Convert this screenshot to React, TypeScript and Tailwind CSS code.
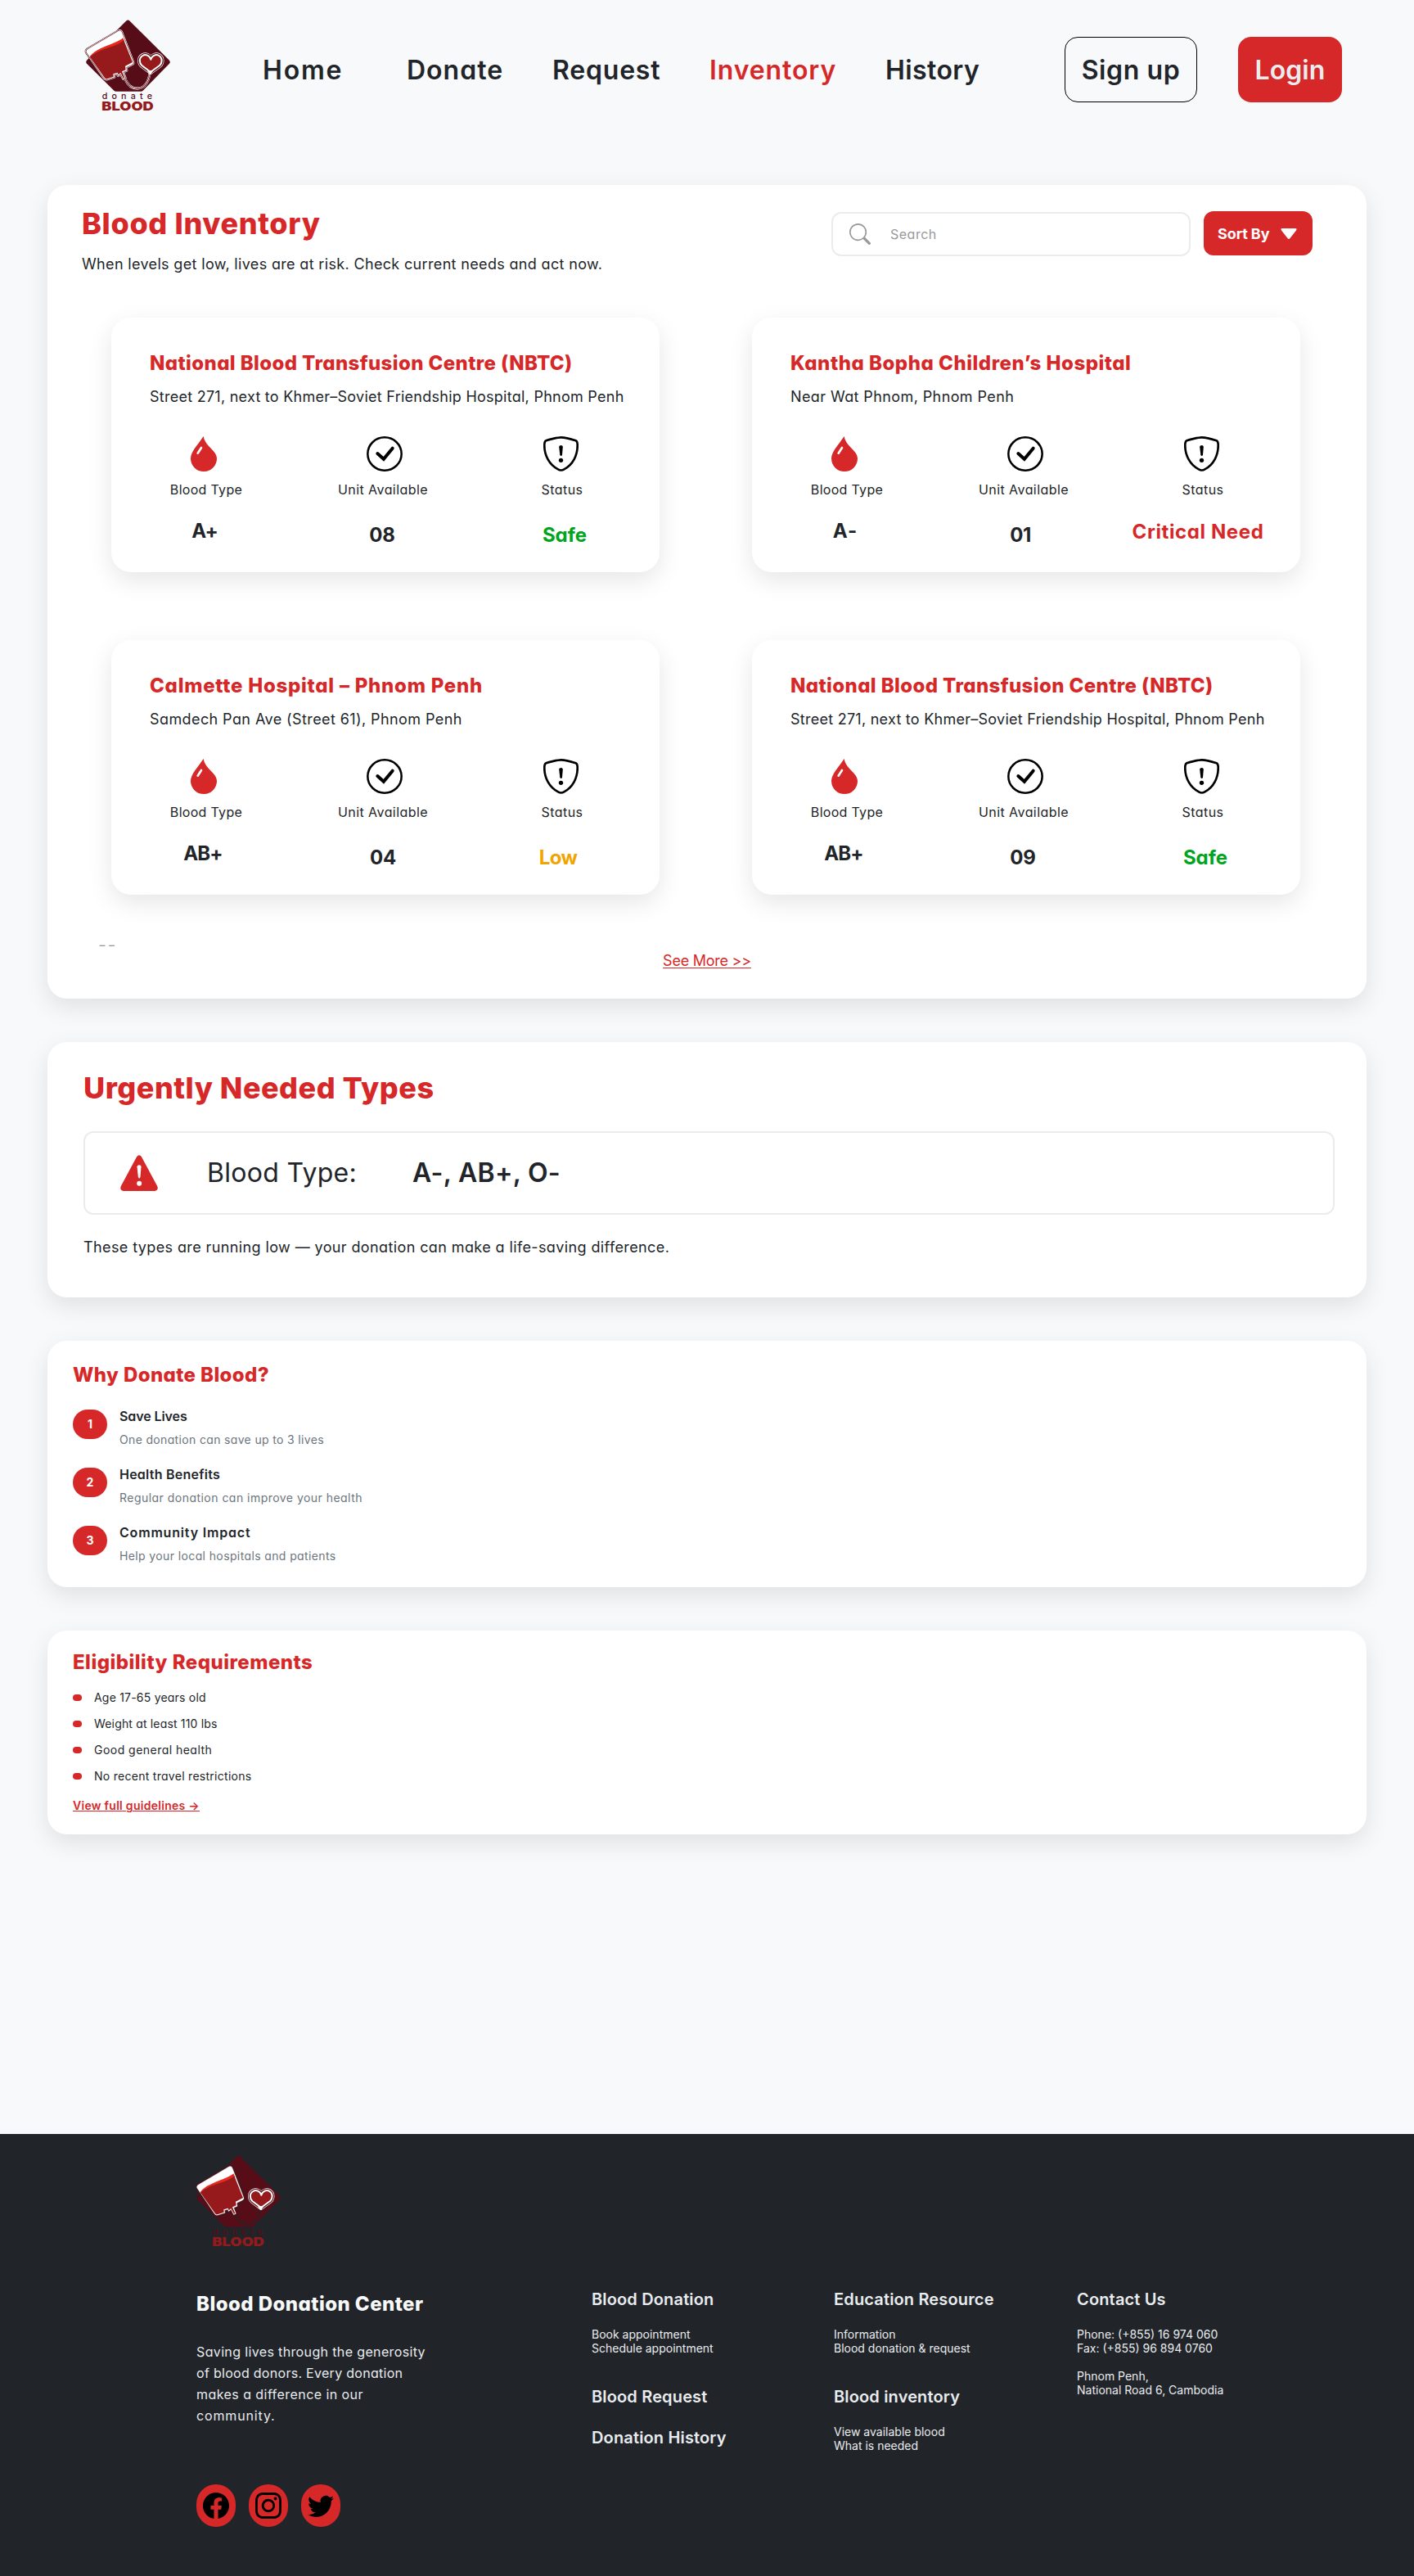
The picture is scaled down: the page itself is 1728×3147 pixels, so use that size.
import type { ReactNode } from "react";
import { BsFacebook, BsInstagram, BsSearch, BsTwitter } from "react-icons/bs";

const cardShadow = "shadow-[0_10px_30px_rgba(0,0,0,0.1)]";
const footerHeading = "text-[20px] leading-[24px] font-semibold tracking-[0.15px]";
const footerLinks = "text-[14px] leading-[17px] font-normal";

function Logo({ line, className }: { line: string; className: string }) {
  const bag =
    "M164 84 Q173 79 177 89 L218 196 Q221 203 215 206 L193 217 L195 229 L182 234 L190 256 L182 260 L172 241 L163 248 L160 240 L148 244 L150 253 L124 261 Q116 263 112 257 L48 163 Q44 156 51 151 Z";
  const heart =
    "M283 188 C279 172 263 168 253 174 C238 183 241 201 250 210 L282 234 L315 210 C325 201 327 183 313 174 C303 168 287 172 283 188 Z";
  const tube = "M279 238 C276 266 262 293 235 294 C212 295 198 280 190 262";
  return (
    <svg viewBox="0 0 390 420" className={className} strokeLinejoin="round" strokeLinecap="round">
      <path d="M192 47 Q199 40 206 47 L351 191 Q356 197 351 203 L254 302 Q251 305 247 305 H155 Q151 305 148 302 L48 203 Q43 197 48 191 Z" fill="#560d18" />
      <g fill="none">
        <path d={tube} stroke={line} strokeWidth="9" />
        <path d={tube} stroke="#560d18" strokeWidth="6.5" />
        <path d={tube} stroke={line} strokeWidth="2.5" />
        <path d={bag} stroke="#560d18" strokeWidth="11" />
        <path d={bag} stroke={line} strokeWidth="8" />
        <path d={bag} stroke="#560d18" strokeWidth="4.5" />
      </g>
      <path d={bag} fill="#fff" stroke="#fff" strokeWidth="1" />
      <path d="M59 177 C78 152 112 142 145 128 Q172 118 181 109 L186 121 Q165 140 130 146 Q90 154 62 182 Z" fill="#e8281c" />
      <path d="M60 179 Q84 157 130 144 Q166 134 184 118 L216 198 L189 212 L191 226 L177 232 L187 255 L183 257 L172 237 L164 244 L161 236 L145 241 L146 251 L122 259 Q117 260 114 256 Z" fill="#961a1b" />
      <path d={heart} fill="none" stroke="#fff" strokeWidth="17" />
      <path d={heart} fill="none" stroke="#560d18" strokeWidth="13" />
      <path d={heart} fill="#961a1b" stroke="#fff" strokeWidth="6" />
      <path d="M272 231 L281 242 L289 231 Z" fill="#fff" stroke="#fff" strokeWidth="3" />
      <text x="104" y="333" textLength="184" fontSize="32" fill="#560d18" className="font-['Inter'] font-medium [font-feature-settings:normal]">
        donate
      </text>
      <text x="103" y="375" textLength="190" lengthAdjust="spacingAndGlyphs" fontSize="44" fill="#961a1b" className="font-['Inter'] font-black">
        BLOOD
      </text>
    </svg>
  );
}

function DropIcon() {
  return (
    <svg viewBox="0 0 96 129" className="h-[43px] w-8 -translate-x-px">
      <path d="M47 0 C49 15 57 25 67 37 C80 51 96 63 96 82 A48 47 0 0 1 0 82 C0 57 24 34 47 0 Z" fill="#d62828" />
      <path d="M39 42 L26 62" stroke="#fff" strokeWidth="8" strokeLinecap="round" />
    </svg>
  );
}

function CheckCircleIcon() {
  return (
    <svg viewBox="0 0 132 129" className="h-[43px] w-11 translate-x-[2px]" fill="none" stroke="#000">
      <ellipse cx="66" cy="64.5" rx="62" ry="60.5" strokeWidth="7.5" />
      <path d="M40 63 L62.500 83.500 L95 44" strokeWidth="12" strokeLinecap="round" />
    </svg>
  );
}

function ShieldIcon() {
  return (
    <svg viewBox="0 0 129 129" className="size-[43px] -translate-x-px">
      <path
        d="M65 4 C78 4 110 13 119 16 Q124 18 125 28 C127 70 107 105 76 121 Q65 128 54 121 C23 105 2 70 4 28 Q5 18 10 16 C20 12 52 4 65 4 Z"
        fill="none"
        stroke="#000"
        strokeWidth="8"
      />
      <path d="M57.500 38 Q58 33 65 33 Q71 33 71.500 38 L69 69 Q65 75 61 69 Z" />
      <circle cx="64.500" cy="88" r="8" />
    </svg>
  );
}

function WarningIcon() {
  return (
    <svg viewBox="0 0 137 132" className="ml-[43px] h-[44px] w-[46px]">
      <path d="M60 6 Q69 -5 77 6 L135 114 Q141 129 126 132 H11 Q-4 129 2 114 Z" fill="#d62828" />
      <path d="M61 43 Q62 37 69 37 Q76 37 76 43 L73 80 Q69 91 65 80 Z" fill="#fff" />
      <circle cx="69" cy="104" r="9" fill="#fff" />
    </svg>
  );
}

function Stat({ icon, label, children }: { icon: ReactNode; label: ReactNode; children: ReactNode }) {
  return (
    <div className="flex flex-col items-center whitespace-nowrap">
      {icon}
      <div className="mt-[10px] text-[16px] leading-[24px]">{label}</div>
      <div className="mt-[21px] text-[24px] leading-[36px] font-bold">{children}</div>
    </div>
  );
}

type Center = { name: ReactNode; address: ReactNode; type: ReactNode; units: ReactNode; status: ReactNode };

const centers: Center[] = [
  {
    name: <span className="tracking-[0.4px]">National Blood Transfusion Centre (NBTC)</span>,
    address: <span className="tracking-[0.26px]">Street 271, next to Khmer–Soviet Friendship Hospital, Phnom Penh</span>,
    type: <div className="tracking-[-1px]">A+</div>,
    units: <div className="-translate-x-px translate-y-[5px] tracking-[-0.2px]">08</div>,
    status: <div className="translate-x-[4px] translate-y-[5px] text-[#00a51e]">Safe</div>,
  },
  {
    name: <span className="tracking-[0.52px]">Kantha Bopha Children’s Hospital</span>,
    address: <span className="tracking-[0.4px]">Near Wat Phnom, Phnom Penh</span>,
    type: <div className="tracking-[1px]">A-</div>,
    units: <div className="-translate-x-1 translate-y-[5px] tracking-[-0.6px]">01</div>,
    status: <div className="-translate-x-[5px] translate-y-px tracking-[0.6px] text-[#d62828]">Critical Need</div>,
  },
  {
    name: <span className="tracking-[0.75px]">Calmette Hospital – Phnom Penh</span>,
    address: <span className="tracking-[0.41px]">Samdech Pan Ave (Street 61), Phnom Penh</span>,
    type: <div className="-translate-x-[2px] tracking-[-0.9px]">AB+</div>,
    units: <div className="translate-y-[5px] tracking-[-0.2px]">04</div>,
    status: <div className="-translate-x-[4px] translate-y-[5px] tracking-[-0.6px] text-[#f0a500]">Low</div>,
  },
  {
    name: <span className="tracking-[0.4px]">National Blood Transfusion Centre (NBTC)</span>,
    address: <span className="tracking-[0.26px]">Street 271, next to Khmer–Soviet Friendship Hospital, Phnom Penh</span>,
    type: <div className="-translate-x-[2px] tracking-[-0.9px]">AB+</div>,
    units: <div className="-translate-x-px translate-y-[5px] tracking-[-0.2px]">09</div>,
    status: <div className="translate-x-[4px] translate-y-[5px] text-[#00a51e]">Safe</div>,
  },
];

function CenterCard({ c }: { c: Center }) {
  return (
    <article className={`h-[311px] rounded-[24px] bg-white pt-[38px] ${cardShadow}`}>
      <h3 className="pl-[47px] text-[24px] leading-[36px] font-extrabold whitespace-nowrap text-[#d62828]">{c.name}</h3>
      <p className="mt-[9px] pl-[47px] text-[18px] leading-[27px] whitespace-nowrap">{c.address}</p>
      <div className="mt-[35px] grid grid-cols-[218px_218px_218px] pl-[5px]">
        <Stat icon={<DropIcon />} label={<div className="translate-x-[2px] tracking-[0.3px]">Blood Type</div>}>{c.type}</Stat>
        <Stat icon={<CheckCircleIcon />} label={<div className="tracking-[0.45px]">Unit Available</div>}>{c.units}</Stat>
        <Stat icon={<ShieldIcon />} label={<div className="translate-x-px tracking-[0.43px]">Status</div>}>{c.status}</Stat>
      </div>
    </article>
  );
}

const reasons = [
  { title: <span className="tracking-[-0.09px]">Save Lives</span>, text: <span className="tracking-[0.34px]">One donation can save up to 3 lives</span> },
  { title: <span className="tracking-[0.24px]">Health Benefits</span>, text: <span className="tracking-[0.47px]">Regular donation can improve your health</span> },
  { title: <span className="tracking-[0.82px]">Community Impact</span>, text: <span className="tracking-[0.38px]">Help your local hospitals and patients</span> },
];

const requirements = [
  <span className="tracking-[0.21px]">Age 17-65 years old</span>,
  <span className="tracking-[0.17px]">Weight at least 110 lbs</span>,
  <span className="tracking-[0.47px]">Good general health</span>,
  <span className="tracking-[0.28px]">No recent travel restrictions</span>,
];

export default function App() {
  return (
    <div className="w-[1728px] bg-[#f8f9fb] font-['Inter',sans-serif] text-[#212529]">
      <div className="h-[2607px] [font-feature-settings:'cv11']">
        <header className="flex h-[226px] items-start">
          <Logo line="#fff" className="mt-[10px] ml-[90px] h-[140px] w-[130px] shrink-0" />
          <nav className="mt-[46px] ml-[101px] grid h-20 w-[980px] shrink-0 grid-cols-[176px_178px_192px_215px_auto] items-center text-[32px] leading-[48px] font-semibold whitespace-nowrap">
            <a className="tracking-[1.8px]">Home</a>
            <a className="tracking-[1px]">Donate</a>
            <a className="tracking-[0.8px]">Request</a>
            <a className="tracking-[0.9px] text-[#d62828]">Inventory</a>
            <a className="tracking-[0.4px]">History</a>
          </nav>
          <div className="mt-[45px] flex gap-[50px] text-[32px] leading-[48px] font-semibold">
            <button className="h-20 w-[162px] rounded-[16px] border border-black pt-px tracking-[0.6px]">Sign up</button>
            <button className="h-20 w-[127px] rounded-[16px] bg-[#d62828] pt-px tracking-[0.1px] text-[#e9ecef]">Login</button>
          </div>
        </header>

        <main className="flex flex-col gap-[53px] px-[58px]">
          <section className={`h-[994px] rounded-[24px] bg-white ${cardShadow}`}>
            <div className="flex h-[162px] items-start justify-between pr-[66px] pl-[42px]">
              <div className="pt-[20px]">
                <h1 className="text-[36px] leading-[54px] font-extrabold tracking-[0.66px] text-[#d62828]">Blood Inventory</h1>
                <p className="mt-[9px] text-[18px] leading-[27px] tracking-[0.34px]">
                  When levels get low, lives are at risk. Check current needs and act now.
                </p>
              </div>
              <div className="flex gap-4 pt-8">
                <div className="mt-px flex h-[54px] w-[439px] items-center rounded-[12px] border-2 border-[#e9ecef] pl-[20px] text-[#999999]">
                  <BsSearch className="size-[26px]" />
                  <span className="ml-6 text-[16px] tracking-[0.5px]">Search</span>
                </div>
                <button className="flex h-[54px] w-[133px] items-center rounded-[12px] bg-[#d62828] pl-[17px] text-[18px] font-bold tracking-[-0.1px] text-white">
                  Sort By
                  <svg viewBox="0 0 20 13" className="ml-[14px] h-[13px] w-5">
                    <path d="M2 0 H18 Q20.500 0.300 19 2.500 L11.500 12 Q10 13.800 8.500 12 L1 2.500 Q-0.500 0.300 2 0 Z" fill="#fff" />
                  </svg>
                </button>
              </div>
            </div>
            <div className="grid grid-cols-[670px_670px] gap-x-[113px] gap-y-[83px] pl-[78px]">
              {centers.map((c, i) => (
                <CenterCard key={i} c={c} />
              ))}
            </div>
            <div className="grid grid-cols-3 items-start">
              <span className="mt-[49px] ml-[62px] text-[22px] leading-[24px] font-light tracking-[1.6px] text-[#999999]">--</span>
              <a className="mt-[67px] justify-self-center text-[18px] leading-[27px] tracking-[-0.25px] text-[#d62828] underline decoration-1 underline-offset-2">
                See More &gt;&gt;
              </a>
            </div>
          </section>

          <section className={`h-[312px] rounded-[24px] bg-white pt-[29px] pl-[44px] ${cardShadow}`}>
            <h2 className="text-[36px] leading-[54px] font-extrabold tracking-[0.49px] text-[#d62828]">Urgently Needed Types</h2>
            <div className="mt-[26px] flex h-[102px] w-[1529px] items-center rounded-[12px] border-2 border-[#e9ecef] text-[32px] leading-[48px]">
              <WarningIcon />
              <span className="ml-[60px] w-[251px] tracking-[0.3px]">Blood Type:</span>
              <span className="font-semibold tracking-[0.3px]">A-, AB+, O-</span>
            </div>
            <p className="mt-[26px] text-[18px] leading-[27px] tracking-[0.39px]">
              These types are running low — your donation can make a life-saving difference.
            </p>
          </section>

          <section className={`h-[301px] rounded-[24px] bg-white pt-[24px] pl-[31px] ${cardShadow}`}>
            <h2 className="text-[24px] leading-[36px] font-extrabold tracking-[0.4px] text-[#d62828]">Why Donate Blood?</h2>
            <ol className="mt-[20px] flex flex-col gap-[19px]">
              {reasons.map((r, i) => (
                <li key={i} className="flex h-[52px] gap-[15px]">
                  <span className="mt-1 flex h-9 w-[42px] items-center justify-center rounded-full bg-[#d62828] pb-[2px] text-[14px] font-bold text-white">
                    {i + 1}
                  </span>
                  <div>
                    <h3 className="text-[16px] leading-[24px] font-semibold">{r.title}</h3>
                    <p className="mt-[6px] text-[14px] leading-[21px] text-[#6c757d]">{r.text}</p>
                  </div>
                </li>
              ))}
            </ol>
          </section>

          <section className={`h-[249px] rounded-[24px] bg-white pt-[21px] pl-[31px] ${cardShadow}`}>
            <h2 className="text-[24px] leading-[36px] font-extrabold tracking-[0.48px] text-[#d62828]">Eligibility Requirements</h2>
            <ul className="mt-[14px] flex flex-col gap-[11px]">
              {requirements.map((r, i) => (
                <li key={i} className="flex items-center gap-[15px] text-[14px] leading-[21px]">
                  <span className="h-2 w-[11px] rounded-full bg-[#d62828]" />
                  {r}
                </li>
              ))}
            </ul>
            <a className="mt-[15px] block text-[14px] leading-[21px] font-semibold tracking-[0.28px] text-[#d62828] underline decoration-1 underline-offset-1">
              View full guidelines →
            </a>
          </section>
        </main>
      </div>

      <footer className="flex h-[540px] bg-[#212529] pl-[240px] text-[#e9ecef]">
        <div className="w-[483px] pt-3 [font-feature-settings:'cv11']">
          <Logo line="#212529" className="-ml-[15px] h-[140px] w-[130px]" />
          <h2 className="mt-[38px] text-[24px] leading-[36px] font-extrabold tracking-[0.45px] text-[#f8f9fa]">Blood Donation Center</h2>
          <p className="mt-[27px] text-[16px] leading-[26px]">
            <span className="block tracking-[0.36px]">Saving lives through the generosity</span>
            <span className="block tracking-[0.29px]">of blood donors. Every donation</span>
            <span className="block tracking-[0.44px]">makes a difference in our</span>
            <span className="block tracking-[0.85px]">community.</span>
          </p>
          <div className="mt-[71px] flex gap-4 text-[32px] text-black">
            <a className="flex h-[52px] w-12 items-center justify-center rounded-full bg-[#d62828]"><BsFacebook /></a>
            <a className="flex h-[52px] w-12 items-center justify-center rounded-full bg-[#d62828]"><BsInstagram /></a>
            <a className="flex h-[52px] w-12 items-center justify-center rounded-full bg-[#d62828]"><BsTwitter /></a>
          </div>
        </div>
        <div className="grid grid-cols-[296px_297px_300px] items-start pt-[190px]">
          <div>
            <h3 className={footerHeading}>Blood Donation</h3>
            <p className={`mt-[22px] ${footerLinks}`}>
              Book appointment
              <br />
              Schedule appointment
            </p>
            <h3 className={`mt-[39px] ${footerHeading}`}>Blood Request</h3>
            <h3 className={`mt-[26px] ${footerHeading}`}>Donation History</h3>
          </div>
          <div>
            <h3 className={footerHeading}>Education Resource</h3>
            <p className={`mt-[22px] ${footerLinks}`}>
              Information
              <br />
              Blood donation &amp; request
            </p>
            <h3 className={`mt-[39px] ${footerHeading}`}>Blood inventory</h3>
            <p className={`mt-[22px] ${footerLinks}`}>
              View available blood
              <br />
              What is needed
            </p>
          </div>
          <div>
            <h3 className={footerHeading}>Contact Us</h3>
            <p className={`mt-[22px] ${footerLinks}`}>
              Phone: (+855) 16 974 060
              <br />
              Fax: (+855) 96 894 0760
              <br />
              <br />
              Phnom Penh,
              <br />
              National Road 6, Cambodia
            </p>
          </div>
        </div>
      </footer>
    </div>
  );
}
